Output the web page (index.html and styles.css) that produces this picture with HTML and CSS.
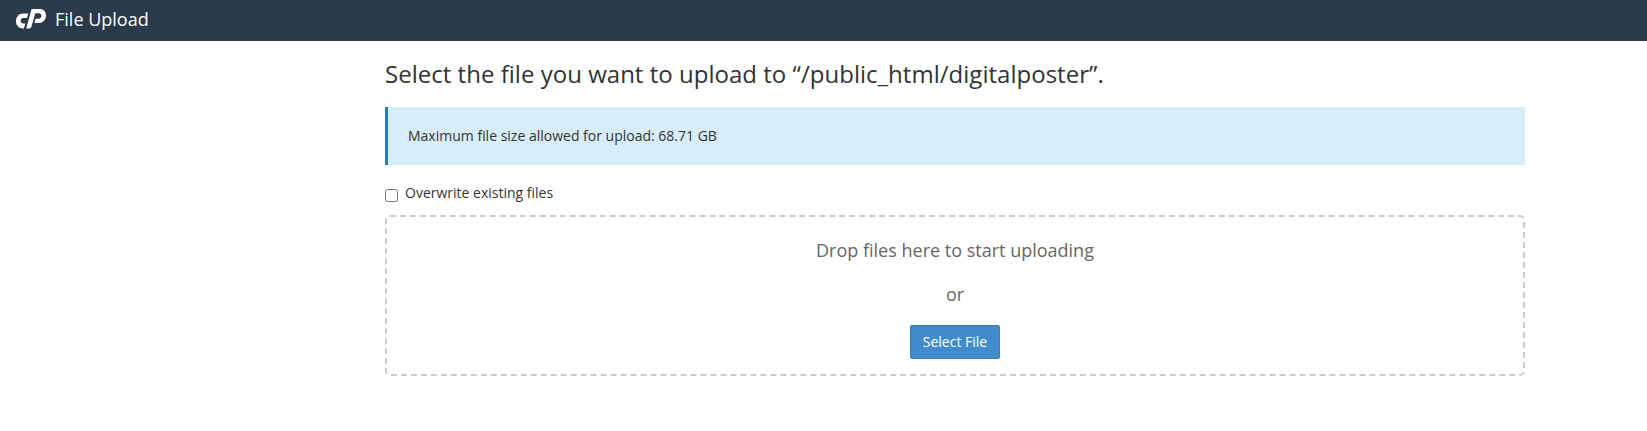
FILE: index.html
```html
<!DOCTYPE html>
<html lang="en">
<head>
<meta charset="utf-8">
<title>File Upload</title>
<link rel="stylesheet" href="styles.css">
</head>
<body>
<header class="navbar">
  <svg class="logo" viewBox="0 0 30 20" width="30" height="20" aria-label="cP">
    <path d="M7 4.600H12.300L10.900 8.900H7.300C5.600 8.900 4.700 10.100 4.700 11.700S5.800 14.500 7.400 14.500H9.300L7.900 19.400H6.800C2.700 19.400 0 16.300 0 12.500 0 8 2.800 4.600 7 4.600Z"/>
    <path d="M15.600 0H23.500C27.500 0 30 2.700 30 6.300 30 10.800 27 14.100 22.600 14.100H18.400L19.600 9.800H22.300C24.200 9.800 25.400 8.500 25.400 6.800 25.400 5.200 24.400 4.300 22.900 4.300H19.300L15.300 18.100C15 19.100 14.300 19.500 13.400 19.500H10.200L15.600 0Z"/>
  </svg>
  <span class="brand">File Upload</span>
</header>
<main class="container">
  <h1 class="title">Select the file you want to upload to “/public_html/digitalposter”.</h1>
  <div class="alert">Maximum file size allowed for upload: 68.71 GB</div>
  <label class="overwrite"><input class="check" type="checkbox"><span>Overwrite existing files</span></label>
  <section class="dropzone">
    <p class="hint">Drop files here to start uploading</p>
    <p class="hint">or</p>
    <button class="button" type="button">Select File</button>
  </section>
</main>
</body>
</html>
```
FILE: styles.css
```css
* { box-sizing: border-box; }
body { margin: 0; background: #fff; color: #333; font: 14px/20px "Open Sans", sans-serif; }
.navbar { display: flex; align-items: center; height: 41px; padding: 0 16px 3px; background: #293a4a; color: #fff; }
.logo { fill: #fff; }
.brand { margin-left: 9px; font-size: 18px; line-height: 24px; }
.container { width: 1140px; margin-left: 385px; }
.title { margin: 0; padding-top: 19px; height: 66px; font-size: 24px; line-height: 27px; font-weight: 400; letter-spacing: 0.02px; white-space: nowrap; }
.alert { height: 58px; padding: 19px 20px; border-left: 3px solid #2980b9; background: #d7edf9; }
.overwrite { display: flex; align-items: flex-start; gap: 7px; height: 50px; padding-top: 18px; }
.check { width: 13px; height: 13px; margin: 6px 0 0; }
.dropzone { display: flex; flex-direction: column; align-items: center; height: 161px; padding-top: 21px; border: 2px dashed #ccc; border-radius: 5px; }
.hint { margin: 0 0 20px; font-size: 18px; line-height: 24px; color: #666; }
.hint + .hint { margin-bottom: 19px; }
.button { width: 90px; height: 34px; padding: 0; border: 1px solid #357ebd; border-radius: 2px; background: #428bca; color: #fff; font: 14px/20px "Open Sans", sans-serif; }
```
